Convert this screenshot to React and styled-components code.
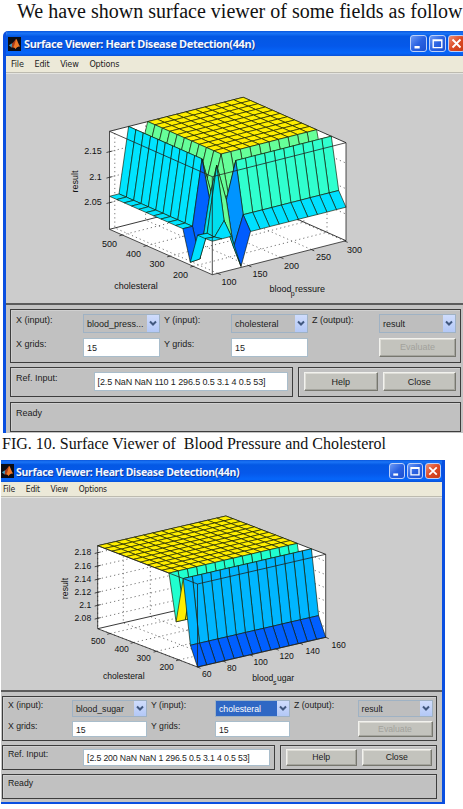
import React from "react"
import styled, { createGlobalStyle, ThemeProvider } from "styled-components"

const GlobalStyle = createGlobalStyle`
  * {
    box-sizing: border-box;
  }
  body {
    margin: 0;
    background: #ffffff;
    overflow: hidden;
  }
`

const Page = styled.main`
  width: 463px;
  height: 809px;
  overflow: hidden;
  background: #ffffff;
  color: #111111;
  font-family: "Liberation Serif", serif;
`
const Intro = styled.p`
  height: 31px;
  margin: 0;
  padding-left: 17px;
  font-size: 20px;
  line-height: 23px;
  white-space: nowrap;
`
const Caption = styled.p`
  height: 27px;
  margin: 0;
  padding: 2px 0 0 2px;
  font-size: 16px;
  line-height: 18px;
  white-space: pre;
`

const Frame = styled.section`
  width: ${p => p.theme.width}px;
  height: ${p => p.theme.height}px;
  margin-left: ${p => p.theme.left}px;
  display: flex;
  flex-direction: column;
  border-style: solid;
  border-color: #0a4fe0;
  border-width: ${p => p.theme.border};
  border-radius: ${p => p.theme.radius};
  background: #c3c3c3;
  overflow: hidden;
  color: #1c1c1c;
  font-family: "Liberation Sans", sans-serif;
`
const TitleBar = styled.header`
  height: ${p => p.theme.titleHeight}px;
  flex-shrink: 0;
  margin-left: -${p => p.theme.bleed}px;
  padding: 0 ${p => p.theme.titleRight}px 0 ${p => p.theme.titleLeft}px;
  display: flex;
  align-items: center;
  background: linear-gradient(
    #0a56dc 0%,
    #1a74f6 9%,
    #0458e4 22%,
    #0558ea 60%,
    #0666fa 88%,
    #0a52d8 100%
  );
`
const Title = styled.h1`
  flex: 1;
  margin: 0 0 0 ${p => p.theme.titleGap}px;
  padding-top: 1px;
  color: #f4f8ff;
  font-family: "Noto Sans", sans-serif;
  font-size: ${p => p.theme.titleFont}px;
  font-weight: 700;
  letter-spacing: ${p => p.theme.titleSpacing}px;
  line-height: 16px;
  text-shadow: 1px 1px 0 #0a3a9c;
  white-space: nowrap;
`
const CaptionButtons = styled.div`
  display: flex;
  gap: 2px;
`
const CaptionButton = styled.button`
  width: ${p => p.theme.captionButton}px;
  height: ${p => p.theme.captionButton}px;
  padding: 0;
  display: flex;
  border: 1px solid #bdd0f8;
  border-radius: 3px;
  background: ${p =>
    p.$close
      ? "linear-gradient(135deg, #ee8f74, #dc4a24 50%, #c63a14)"
      : "linear-gradient(135deg, #6d9af5, #2a62e2 50%, #1c4fd0)"};
`
const MenuBar = styled.nav`
  height: ${p => p.theme.menuHeight}px;
  flex-shrink: 0;
  padding-left: ${p => p.theme.menuLeft}px;
  display: flex;
  align-items: center;
  gap: ${p => p.theme.menuGap}px;
  border-bottom: 1px solid #bdbbb0;
  background: #ece9d8;
  font-family: "DejaVu Sans Condensed", "DejaVu Sans", sans-serif;
  font-size: ${p => p.theme.menuFont}px;
  letter-spacing: -0.2px;
`
const ChartArea = styled.div`
  height: ${p => p.theme.chartHeight}px;
  flex-shrink: 0;
  border-top: 1px solid #e4e4e0;
  border-bottom: 2px solid #5c5c5c;
  background: #cccccc;
`
const Plot = styled.svg`
  display: block;
  width: 100%;
  height: 100%;
  text {
    font-family: "Liberation Sans", sans-serif;
    font-size: ${p => p.theme.plotFont}px;
    fill: #111111;
  }
`
const Controls = styled.div`
  padding: ${p => p.theme.controlsPadding};
  display: flex;
  flex-direction: column;
  gap: ${p => p.theme.panelGap}px;
  font-size: ${p => p.theme.font}px;
`
const Panel = styled.div`
  height: ${p => p.$height}px;
  width: ${p => (p.$width ? `${p.$width}px` : "100%")};
  flex-shrink: 0;
  padding: ${p => p.theme.panelPad}px 4px 0 5px;
  border: 1.5px solid #3d3d3d;
  box-shadow: inset 1px 1px 0 #d0d0d0;
  background: #c1c1c1;
`
const PanelRow = styled.div`
  display: flex;
  justify-content: space-between;
`
const FieldGrid = styled(Panel)`
  display: grid;
  grid-template-columns: ${p => p.theme.columns};
  grid-auto-rows: ${p => p.theme.fieldHeight}px;
  row-gap: ${p => p.theme.rowGap}px;
`
const LinePanel = styled(Panel)`
  display: flex;
  gap: 5px;
`
const Label = styled.label`
  padding-left: ${p => (p.$next ? 4 : 0)}px;
  line-height: ${p => p.theme.labelLine}px;
  white-space: nowrap;
`
const TextField = styled.div`
  height: ${p => p.theme.fieldHeight}px;
  flex: 1;
  margin-left: ${p => p.$offset || 0}px;
  padding: 1px 0 0 3px;
  border: 1px solid #a9bdcb;
  background: #ffffff;
  line-height: ${p => p.theme.fieldHeight - 2}px;
  letter-spacing: ${p => (p.$offset ? -0.12 : 0)}px;
  white-space: nowrap;
`
const Combo = styled.div`
  height: ${p => p.theme.fieldHeight}px;
  display: flex;
  justify-content: space-between;
  border: 1px solid #9fb2c4;
  background: ${p => (p.$selected ? "#2f67c4" : "#bebebe")};
  color: ${p => (p.$selected ? "#ffffff" : "#1c1c1c")};
  padding-left: 3px;
  line-height: ${p => p.theme.fieldHeight}px;
  white-space: nowrap;
`
const Arrow = styled.span`
  width: 12px;
  flex-shrink: 0;
  display: flex;
  align-items: center;
  justify-content: center;
  background: linear-gradient(#cfdcfc, #b3c8f6);
`
const PushButton = styled.button`
  height: ${p => p.theme.fieldHeight}px;
  flex: 1;
  padding: 0;
  border: 1px solid;
  border-color: #f2f2ee #77776f #77776f #f2f2ee;
  box-shadow: inset -1px -1px 0 #a5a59e, inset 1px 1px 0 #dddcd6;
  background: #c3c3bd;
  color: ${p => (p.disabled ? "#a2a29c" : "#1c1c1c")};
  font: inherit;
  line-height: 12px;
`

// Oblique projection of a 14x14 grid: u runs to the right, v to the left.
const N = 14
const project = box => (u, v, h) => [
  box.front[0] + (u * (box.right[0] - box.front[0]) + v * (box.left[0] - box.front[0])) / N,
  box.front[1] + (u * (box.right[1] - box.front[1]) + v * (box.left[1] - box.front[1])) / N - h,
]
const join = points => points.map(p => p.map(n => n.toFixed(1)).join(",")).join(" ")

const pressure = {
  box: { front: [212.3, 274.7], left: [109.5, 229.3], right: [346, 240.7], height: 98 },
  height(u, v) {
    const top = 98
    const special = {
      "0,3": 2.7, "1,3": 3.5, "2,3": 62, "3,3": 58,
      "3,0": 1, "3,1": 17, "3,2": 61,
      "2,2": top, "2,1": 46, "1,2": 32.5, "1,1": 32,
    }
    const key = `${u},${v}`
    if (key in special) return special[key]
    if (v > 3 && u > 3) return top
    if (u < 2 && v > 0) return 33
    if (v === 0) return 33.5
    if (v === 1) return 47
    if (u === 3 || v === 3) return 60
    return top
  },
  color(u, v) {
    if (u >= 4 && v >= 4) return "#ffee00"
    if (u === 1 && v === 3) return "#0062ff"
    if (u === 0 && v === 3) return "#0062ff"
    if (u === 3 && v === 1) return "#0094ff"
    if (u === 3 && v === 0) return "#005cff"
    if (u < 2 && v >= 4) return "#00e4ff"
    if (v === 0 || u === 0) return "#00e0ff"
    if (v === 1 && u > 3) return "#30ffcf"
    if (u < 2 && v < 3) return "#00dfee"
    return "#66ff99"
  },
  zTicks: [["2.15", 151.7], ["2.1", 177.3], ["2.05", 202.7]],
  zRight: 101.8,
  leftTicks: [["500", 102, 246.5, 0.875], ["400", 126, 257, 0.64], ["300", 149.5, 267, 0.41], ["200", 173, 277.5, 0.185]],
  rightTicks: [["100", 221.5, 284.5, 0.04], ["150", 252.5, 276.5, 0.27], ["200", 284, 268.5, 0.51], ["250", 316, 260, 0.74], ["300", 347, 252.5, 0.99]],
  leftName: [114.3, 289],
  zName: [77.5, 181.5],
  rightName: ["blood", 269.5, "p", 290.8, "ressure", 295, 292],
}

const sugar = {
  box: { front: [197.5, 667], left: [97.7, 628.7], right: [325.7, 637.3], height: 83 },
  height(u, v) {
    return [0, 19, 83, 37][v] ?? 83
  },
  color(u, v) {
    return ["#005fff", "#00b6ff", "#ffee00", "#20ffcf"][v] || "#ffee00"
  },
  zTicks: [["2.18", 552.7], ["2.16", 566], ["2.14", 579.2], ["2.12", 592.3], ["2.1", 605.3], ["2.08", 618.3]],
  zRight: 91.2,
  leftTicks: [["500", 91, 643.5, 0.875], ["400", 114.5, 652, 0.64], ["300", 136.5, 661, 0.41], ["200", 159.5, 669.5, 0.185]],
  rightTicks: [["60", 202, 677, 0], ["80", 227, 671, 0.2], ["100", 253.5, 665, 0.41], ["120", 279.5, 659, 0.61], ["140", 305.5, 653.5, 0.8], ["160", 331.5, 648, 1]],
  leftName: [103, 679],
  zName: [67.5, 588.5],
  rightName: ["blood", 252.3, "s", 273, "ugar", 277, 681],
}

const Surface = ({ data, viewBox }) => {
  const { box } = data
  const P = project(box)
  const H = box.height
  const cells = []
  for (let v = N - 1; v >= 0; v--) {
    for (let u = N - 1; u >= 0; u--) {
      const corners = [[u, v], [u + 1, v], [u + 1, v + 1], [u, v + 1]]
      cells.push(
        <polygon
          key={`${u}-${v}`}
          points={join(corners.map(([a, b]) => P(a, b, data.height(a, b))))}
          fill={data.color(u, v)}
        />
      )
    }
  }
  const [blood, bloodX, sub, subX, rest, restX, nameY] = data.rightName

  return (
    <Plot viewBox={viewBox} preserveAspectRatio="none">
      <polygon
        fill="#ffffff"
        points={join([P(0, N, 0), P(0, N, H), P(N, N, H), P(N, 0, H), P(N, 0, 0), P(0, 0, 0)])}
      />
      <g fill="none" stroke="#666666" strokeWidth="0.9" strokeDasharray="1.2 3">
        {data.zTicks.map(([name, y]) => {
          const h = box.left[1] - y
          return <polyline key={name} points={join([P(0, N, h), P(N, N, h), P(N, 0, h)])} />
        })}
        {data.leftTicks.map(([name, , , t]) => (
          <polyline key={name} points={join([P(0, t * N, 0), P(N, t * N, 0), P(N, t * N, H)])} />
        ))}
        {data.rightTicks.map(([name, , , t]) => (
          <polyline key={name} points={join([P(t * N, 0, 0), P(t * N, N, 0), P(t * N, N, H)])} />
        ))}
      </g>
      <g fill="none" stroke="#222222" strokeWidth="0.9">
        <polyline points={join([P(0, N, 0), P(N, N, 0), P(N, 0, 0)])} />
        <polyline points={join([P(0, N, H), P(N, N, H), P(N, 0, H)])} />
      </g>
      <g stroke="#101800" strokeWidth="0.65" strokeLinejoin="round">
        {cells}
      </g>
      <g fill="none" stroke="#222222" strokeWidth="0.8">
        <polyline points={join([P(0, N, H), P(0, N, 0), P(0, 0, 0), P(N, 0, 0), P(N, 0, H)])} />
        <polyline points={join([P(0, N, H), P(0, 0, H), P(N, 0, H)])} />
        <polyline points={join([P(0, 0, H), P(0, 0, 0)])} />
        {data.zTicks.map(([name, y]) => (
          <path key={name} d={`M${box.left[0] - 3} ${y + 0.8}l3 -0.8l3 -0.7`} />
        ))}
        {data.leftTicks.map(([name, , , t]) => {
          const [x, y] = P(0, t * N, 0)
          return <path key={name} d={`M${x - 3} ${y + 0.8}L${x} ${y}`} />
        })}
        {data.rightTicks.map(([name, , , t]) => {
          const [x, y] = P(t * N, 0, 0)
          return <path key={name} d={`M${x} ${y}l3 1.3`} />
        })}
      </g>
      {data.zTicks.map(([name, y]) => (
        <text key={name} x={data.zRight} y={y + 2.6} textAnchor="end">
          {name}
        </text>
      ))}
      {[...data.leftTicks, ...data.rightTicks].map(([name, x, y]) => (
        <text key={`${name}-${x}`} x={x} y={y}>
          {name}
        </text>
      ))}
      <text x={data.leftName[0]} y={data.leftName[1]}>cholesteral</text>
      <text transform={`translate(${data.zName[0]} ${data.zName[1]}) rotate(-90)`} textAnchor="middle">
        result
      </text>
      <text x={bloodX} y={nameY}>{blood}</text>
      <Subscript x={subX} y={nameY + 3.5}>{sub}</Subscript>
      <text x={restX} y={nameY}>{rest}</text>
    </Plot>
  )
}

const Subscript = styled.text`
  && {
    font-size: 7px;
  }
`

const MatlabIcon = () => (
  <svg width="13" height="14" viewBox="0 0 13 14">
    <rect width="13" height="14" fill="#0b0d14" />
    <path d="M0.8 8.2L4.2 6.3L6 8L3.6 10.4Z" fill="#3f9fc0" />
    <path d="M4.2 6.3C6 5.5 7 2.5 8.2 1.8L6.8 8.6L5 10.6L3.6 10.4Z" fill="#a83c1c" />
    <path d="M8.2 1.8C9.4 3.4 10.5 7.5 12.2 9.8C10.5 9 9 10 7.4 12.2C7 11 6.3 10.2 5 10.6C7 8.5 7 4 8.2 1.8Z" fill="#f07a28" />
  </svg>
)

const glyphs = {
  min: <path d="M3.5 11.3h5.2" strokeWidth="2.4" />,
  max: <path d="M3.2 4h8.6v7.6H3.2zM3.2 4.6h8.6" strokeWidth="1.4" />,
  close: <path d="M3.5 3.5l8 8M11.5 3.5l-8 8" strokeWidth="1.9" />,
}
const Glyph = ({ name }) => (
  <svg width="100%" height="100%" viewBox="0 0 15 15" fill="none" stroke="#ffffff">
    {glyphs[name]}
  </svg>
)

const Select = ({ value, selected }) => (
  <Combo $selected={selected}>
    {value}
    <Arrow>
      <svg width="8" height="7" viewBox="0 0 8 7" fill="none" stroke="#41587f" strokeWidth="2">
        <path d="M1 1.5L4 4.5L7 1.5" />
      </svg>
    </Arrow>
  </Combo>
)

const Viewer = ({ theme, data, xInput, refInput, ySelected }) => (
  <ThemeProvider theme={theme}>
    <Frame>
      <TitleBar>
        <MatlabIcon />
        <Title>Surface Viewer: Heart Disease Detection(44n)</Title>
        <CaptionButtons>
          <CaptionButton><Glyph name="min" /></CaptionButton>
          <CaptionButton><Glyph name="max" /></CaptionButton>
          <CaptionButton $close><Glyph name="close" /></CaptionButton>
        </CaptionButtons>
      </TitleBar>
      <MenuBar>
        <span>File</span>
        <span>Edit</span>
        <span>View</span>
        <span>Options</span>
      </MenuBar>
      <ChartArea>
        <Surface data={data} viewBox={theme.viewBox} />
      </ChartArea>
      <Controls>
        <FieldGrid $height={theme.fieldsPanel}>
          <Label>X (input):</Label>
          <Select value={xInput} />
          <Label $next>Y (input):</Label>
          <Select value="cholesteral" selected={ySelected} />
          <Label $next>Z (output):</Label>
          <Select value="result" />
          <Label>X grids:</Label>
          <TextField>15</TextField>
          <Label $next>Y grids:</Label>
          <TextField>15</TextField>
          <span />
          <PushButton disabled>Evaluate</PushButton>
        </FieldGrid>
        <PanelRow>
          <LinePanel $height={theme.linePanel} $width={theme.refWidth}>
            <Label>Ref. Input:</Label>
            <TextField $offset={theme.refOffset}>{refInput}</TextField>
          </LinePanel>
          <LinePanel $height={theme.linePanel} $width={theme.actionsWidth}>
            <PushButton>Help</PushButton>
            <PushButton>Close</PushButton>
          </LinePanel>
        </PanelRow>
        <LinePanel $height={theme.linePanel}>
          <Label>Ready</Label>
        </LinePanel>
      </Controls>
    </Frame>
  </ThemeProvider>
)

const largeWindow = {
  width: 466,
  height: 402,
  left: 3,
  border: "0 0 0 3px",
  radius: "5px 0 0 0",
  bleed: 3,
  titleHeight: 25,
  titleLeft: 5,
  titleRight: 4,
  titleGap: 3,
  titleFont: 11,
  titleSpacing: -0.39,
  captionButton: 17,
  menuHeight: 17,
  menuLeft: 5,
  menuGap: 10.8,
  menuFont: 9,
  chartHeight: 232,
  viewBox: "6 74 463 229",
  plotFont: 9,
  controlsPadding: "4px 8px 0 4px",
  panelGap: 4.5,
  font: 9,
  fieldsPanel: 53.5,
  linePanel: 30,
  panelPad: 4,
  columns: "67px 77px 71px 77px 71px 77px",
  fieldHeight: 19,
  rowGap: 4.5,
  labelLine: 13,
  refWidth: 283,
  refOffset: 31,
  actionsWidth: 163,
}

const smallWindow = {
  width: 444,
  height: 344,
  left: 1,
  border: "0 3px 2px 0",
  radius: "0",
  bleed: 0,
  titleHeight: 22,
  titleLeft: 0,
  titleRight: 1,
  titleGap: 2,
  titleFont: 10.5,
  titleSpacing: -0.3,
  captionButton: 16,
  menuHeight: 15,
  menuLeft: 2,
  menuGap: 10.8,
  menuFont: 8.5,
  chartHeight: 195,
  viewBox: "1 498 441 192",
  plotFont: 8.6,
  controlsPadding: "4px 5px 0 1px",
  panelGap: 4,
  font: 8.7,
  fieldsPanel: 45,
  linePanel: 25,
  panelPad: 3,
  columns: "64px 75px 68px 75px 67.5px 75px",
  fieldHeight: 16.5,
  rowGap: 4,
  labelLine: 10,
  refWidth: 273,
  refOffset: 30,
  actionsWidth: 157,
}

const App = () => (
  <Page>
    <GlobalStyle />
    <Intro>We have shown surface viewer of some fields as follow</Intro>
    <Viewer
      theme={largeWindow}
      data={pressure}
      xInput="blood_press..."
      refInput="[2.5 NaN NaN 110 1 296.5 0.5 3.1 4 0.5 53]"
    />
    <Caption>{"FIG. 10. Surface Viewer of  Blood Pressure and Cholesterol"}</Caption>
    <Viewer
      theme={smallWindow}
      data={sugar}
      xInput="blood_sugar"
      refInput="[2.5 200 NaN NaN 1 296.5 0.5 3.1 4 0.5 53]"
      ySelected
    />
  </Page>
)

export default App
